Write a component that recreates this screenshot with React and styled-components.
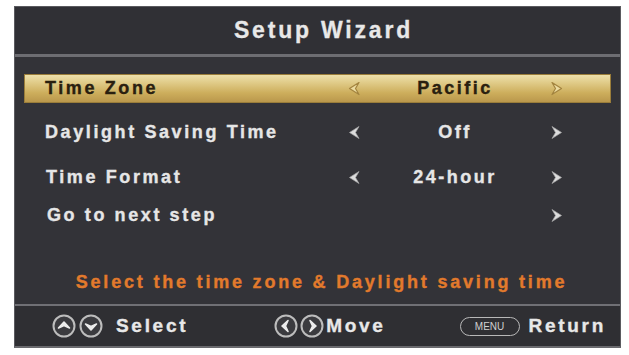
import React from "react";
import styled, { createGlobalStyle } from "styled-components";

const Global = createGlobalStyle`
  html, body { margin: 0; padding: 0; background: #ffffff; }
  body { font-family: "Liberation Sans", Arial, sans-serif; }
`;

const Panel = styled.div`
  margin: 6px 0 0 14px;
  width: 607px;
  height: 342px;
  box-sizing: border-box;
  background: #333338;
  border: 1px solid #5a5a5f;
  border-bottom: 2px solid #6a6a6e;
  display: flex;
  flex-direction: column;
`;

const Header = styled.div`
  height: 47px;
  flex: none;
  display: flex;
  align-items: center;
  justify-content: center;
  background: #303035;
  border-bottom: 3px solid #6d6d72;
`;

const Title = styled.h1`
  margin: 0 0 0 12px;
  font-size: 23px;
  font-weight: 700;
  letter-spacing: 2.8px;
  color: #e8e8e8;
  -webkit-text-stroke: 0.3px #e8e8e8;
`;

const Body = styled.div`
  flex: 1;
  display: flex;
  flex-direction: column;
  padding: 17px 9px 0 9px;
`;

const Row = styled.div`
  height: 29px;
  margin-top: ${(p) => p.$gap || 0}px;
  display: grid;
  grid-template-columns: 315px 30px 172px 30px 1fr;
  align-items: center;
  box-sizing: border-box;
  background: ${(p) =>
    p.$active
      ? "linear-gradient(180deg, #efe3b0 0%, #e0cb88 30%, #cdae5c 65%, #b8954a 100%)"
      : "transparent"};
  box-shadow: ${(p) => (p.$active ? "inset 0 0 0 1px #9a7d3a" : "none")};
  color: ${(p) => (p.$active ? "#2a200f" : "#e6e6e6")};
`;

const Label = styled.span`
  padding-left: ${(p) => p.$indent || 21}px;
  font-size: 18px;
  font-weight: 700;
  letter-spacing: 2.6px;
  white-space: nowrap;
  -webkit-text-stroke: 0.35px currentColor;
`;

const Value = styled.span`
  text-align: center;
  font-size: 18px;
  font-weight: 700;
  letter-spacing: 2.5px;
  -webkit-text-stroke: 0.35px currentColor;
`;

const ArrowCell = styled.span`
  display: flex;
  justify-content: center;
  align-items: center;
`;

const Message = styled.div`
  margin-top: auto;
  height: 44px;
  padding-left: 8px;
  display: flex;
  align-items: center;
  justify-content: center;
  font-size: 18px;
  font-weight: 700;
  letter-spacing: 2.8px;
  color: #e27a2c;
  -webkit-text-stroke: 0.35px #e27a2c;
`;

const Footer = styled.div`
  height: 40px;
  flex: none;
  border-top: 2px solid #707075;
  background: #2f2f33;
  display: flex;
  align-items: center;
  color: #e8e8e8;
`;

const Hint = styled.div`
  display: flex;
  align-items: center;
  gap: ${(p) => p.$gap || 0}px;
  margin-left: ${(p) => p.$left}px;
  font-size: 19px;
  font-weight: 700;
  letter-spacing: 2.7px;
  -webkit-text-stroke: 0.35px #e8e8e8;
`;

const Icons = styled.span`
  display: flex;
  gap: ${(p) => p.$gap || 2}px;
`;

const Arrow = ({ dir, active }) => {
  const d =
    dir === "left"
      ? "M11 1.5 L1.5 7.5 L11 13.5 L7.5 7.5 Z"
      : "M2 1.5 L11.5 7.5 L2 13.5 L5.5 7.5 Z";
  return (
    <svg width="13" height="15" viewBox="0 0 13 15">
      <path
        d={d}
        fill={active ? "#ecdba0" : "#dcdcdc"}
        stroke={active ? "#a3843f" : "#a8a8a8"}
        strokeWidth={active ? 1.2 : 0.7}
        strokeLinejoin="round"
      />
    </svg>
  );
};

const CircleBtn = ({ dir }) => {
  const paths = {
    up: "M6.5 14 L12 8 L17.5 14 L12 11.5 Z",
    down: "M6.5 10 L12 16 L17.5 10 L12 12.5 Z",
    left: "M14 6.5 L8 12 L14 17.5 L11.5 12 Z",
    right: "M10 6.5 L16 12 L10 17.5 L12.5 12 Z",
  };
  return (
    <svg width="24" height="24" viewBox="0 0 24 24">
      <circle cx="12" cy="12" r="10.5" fill="#3b3b3f" stroke="#bdbdbd" strokeWidth="2" />
      <path d={paths[dir]} fill="#ececec" stroke="#ececec" strokeWidth="1.6" strokeLinejoin="round" />
    </svg>
  );
};

const MenuPill = styled.span`
  display: inline-flex;
  align-items: center;
  justify-content: center;
  width: 60px;
  height: 19px;
  box-sizing: border-box;
  border: 1.5px solid #b8b8b8;
  border-radius: 10px;
  font-family: "Liberation Sans Narrow", "Liberation Sans", Arial, sans-serif;
  font-size: 10px;
  font-weight: 400;
  letter-spacing: 0;
  -webkit-text-stroke: 0;
  color: #d0d0d0;
`;

const rows = [
  { label: "Time Zone", value: "Pacific", active: true, gap: 0, left: true },
  { label: "Daylight Saving Time", value: "Off", gap: 15, left: true },
  { label: "Time Format", value: "24-hour", gap: 16, left: true, indent: 22 },
  { label: "Go to next step", value: "", gap: 9, left: false, indent: 23 },
];

export default function App() {
  return (
    <>
      <Global />
      <Panel>
        <Header>
          <Title>Setup Wizard</Title>
        </Header>
        <Body>
          {rows.map((r) => (
            <Row key={r.label} $active={r.active} $gap={r.gap}>
              <Label $indent={r.indent}>{r.label}</Label>
              <ArrowCell>{r.left && <Arrow dir="left" active={r.active} />}</ArrowCell>
              <Value>{r.value}</Value>
              <ArrowCell>
                <Arrow dir="right" active={r.active} />
              </ArrowCell>
              <span />
            </Row>
          ))}
          <Message>Select the time zone &amp; Daylight saving time</Message>
        </Body>
        <Footer>
          <Hint $left={37} $gap={13}>
            <Icons $gap={3}>
              <CircleBtn dir="up" />
              <CircleBtn dir="down" />
            </Icons>
            Select
          </Hint>
          <Hint $left={86} $gap={2}>
            <Icons $gap={2}>
              <CircleBtn dir="left" />
              <CircleBtn dir="right" />
            </Icons>
            Move
          </Hint>
          <Hint $left={74} $gap={9}>
            <MenuPill>MENU</MenuPill>
            Return
          </Hint>
        </Footer>
      </Panel>
    </>
  );
}
